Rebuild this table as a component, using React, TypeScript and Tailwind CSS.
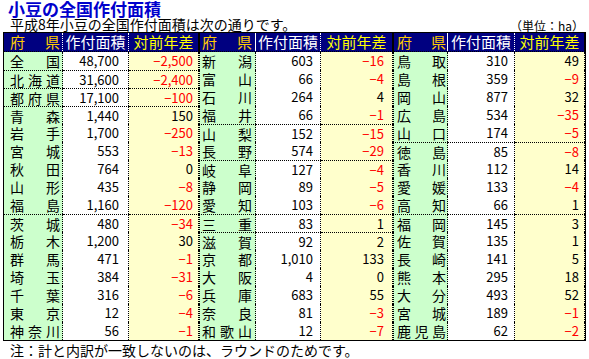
import React from "react";

type Row = [string, string, string, boolean?];

// [name, area, diff, group line above]
const sec1: Row[] = [
  ["全国", "48,700", "−2,500"],
  ["北海道", "31,600", "−2,400", true],
  ["都府県", "17,100", "−100", true],
  ["青森", "1,440", "150", true],
  ["岩手", "1,700", "−250"],
  ["宮城", "553", "−13"],
  ["秋田", "764", "0"],
  ["山形", "435", "−8"],
  ["福島", "1,160", "−120"],
  ["茨城", "480", "−34", true],
  ["栃木", "1,200", "30"],
  ["群馬", "471", "−1"],
  ["埼玉", "384", "−31"],
  ["千葉", "316", "−6"],
  ["東京", "12", "−4"],
  ["神奈川", "56", "−1"],
];

const sec2: Row[] = [
  ["新潟", "603", "−16"],
  ["富山", "66", "−4"],
  ["石川", "264", "4"],
  ["福井", "66", "−1"],
  ["山梨", "152", "−15", true],
  ["長野", "574", "−29"],
  ["岐阜", "127", "−4", true],
  ["静岡", "89", "−5"],
  ["愛知", "103", "−6"],
  ["三重", "83", "1", true],
  ["滋賀", "92", "2", true],
  ["京都", "1,010", "133"],
  ["大阪", "4", "0"],
  ["兵庫", "683", "55"],
  ["奈良", "81", "−3"],
  ["和歌山", "12", "−7"],
];

const sec3: Row[] = [
  ["鳥取", "310", "49"],
  ["島根", "359", "−9"],
  ["岡山", "877", "32"],
  ["広島", "534", "−35"],
  ["山口", "174", "−5"],
  ["徳島", "85", "−8", true],
  ["香川", "112", "14"],
  ["愛媛", "133", "−4"],
  ["高知", "66", "1"],
  ["福岡", "145", "3", true],
  ["佐賀", "135", "1"],
  ["長崎", "141", "5"],
  ["熊本", "295", "18"],
  ["大分", "493", "52"],
  ["宮城", "189", "−1"],
  ["鹿児島", "62", "−2"],
];

interface SectionProps {
  rows: Row[];
  first?: boolean;
  nameW: string;
  areaW: string;
  diffW: string;
  namePad: string;
  areaPad: string;
  diffPad: string;
}

function Section({ rows, first, nameW, areaW, diffW, namePad, areaPad, diffPad }: SectionProps) {
  return (
    <div className="flex flex-col">
      {/* header */}
      <div className="flex h-[19px] bg-[#000080] border-b border-dotted border-black text-[15px] leading-[18px]">
        <div
          className={`${nameW} ${namePad} flex justify-between border-r border-dotted border-white ${
            first ? "" : "border-l border-l-black border-solid"
          } text-[#ffcc00]`}
        >
          <span>府</span>
          <span>県</span>
        </div>
        <div className={`${areaW} flex justify-center border-r border-dotted border-white text-white`}>作付面積</div>
        <div className={`${diffW} flex justify-center border-r border-solid border-black text-[#ffff00]`}>対前年差</div>
      </div>
      {rows.map(([name, area, diff, line], i) => {
        const t = line ? "border-t" : "";
        const neg = diff.startsWith("−");
        return (
          <div key={i} className="flex h-[18px]">
            <div
              className={`${nameW} ${namePad} ${t} ${
                first ? "" : "border-l"
              } border-r border-dotted border-black bg-[#ccffcc] flex justify-between items-center text-[14px] leading-[16px]`}
            >
              {name.split("").map((c, j) => (
                <span key={j}>{c}</span>
              ))}
            </div>
            <div
              className={`${areaW} ${areaPad} ${t} border-r border-dotted border-black bg-white flex justify-end items-center text-[13px] leading-[16px]`}
            >
              {area}
            </div>
            <div
              className={`${diffW} ${diffPad} ${t} border-r border-dotted border-black bg-[#ffffcc] flex justify-end items-center text-[13px] leading-[16px] ${
                neg ? "text-[#ff0000]" : "text-black"
              }`}
            >
              {diff}
            </div>
          </div>
        );
      })}
    </div>
  );
}

export default function App() {
  return (
    <div className="w-[589px] h-[359px] bg-white text-black font-['Noto_Sans_CJK_JP',sans-serif] overflow-hidden">
      <div className="pl-[8px] h-[17px] text-[17px] font-bold leading-[18px] text-[#0000cc]">小豆の全国作付面積</div>
      <div className="flex items-end justify-between pl-[10px] pr-[5px] h-[15px]">
        <span className="text-[14px] leading-[15px]">平成8年小豆の全国作付面積は次の通りです。</span>
        <span className="text-[12px] leading-[12px]">（単位：ha）</span>
      </div>
      <div className="ml-[3px] w-[583px] flex border border-black">
        <Section
          rows={sec1}
          first
          nameW="w-[59px]"
          areaW="w-[66px]"
          diffW="w-[70px]"
          namePad="pl-[6px] pr-[2px]"
          areaPad="pr-[9px]"
          diffPad="pr-[5px]"
        />
        <Section
          rows={sec2}
          nameW="w-[57px]"
          areaW="w-[65px]"
          diffW="w-[72px]"
          namePad="pl-[2px] pr-[3px]"
          areaPad="pr-[7px]"
          diffPad="pr-[8px]"
        />
        <Section
          rows={sec3}
          nameW="w-[55px]"
          areaW="w-[67px]"
          diffW="w-[70px]"
          namePad="pl-[3px] pr-[1px]"
          areaPad="pr-[6px]"
          diffPad="pr-[5px]"
        />
      </div>
      <div className="pl-[10px] text-[14px] leading-[18px]">注：計と内訳が一致しないのは、ラウンドのためです。</div>
    </div>
  );
}
